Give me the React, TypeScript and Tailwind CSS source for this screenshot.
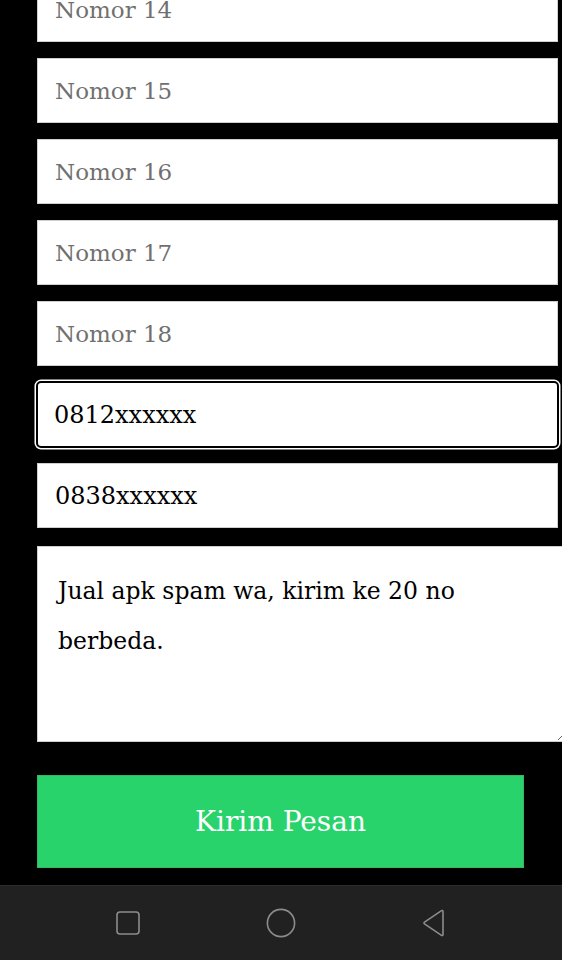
import { useState } from "react";

const fields = ["Nomor 14", "Nomor 15", "Nomor 16", "Nomor 17", "Nomor 18"];

const NavBar = () => (
  <div className="h-[75px] bg-[#212121] border-t border-[#2c2c2c] flex items-center justify-center gap-[123px] pb-[1px]">
    <svg width="28" height="28" viewBox="0 0 28 28" fill="none" stroke="#8c8c8c" strokeWidth="1.6">
      <rect x="3" y="3" width="22" height="22" rx="3" />
    </svg>
    <svg width="32" height="32" viewBox="0 0 32 32" fill="none" stroke="#8c8c8c" strokeWidth="1.6">
      <circle cx="16" cy="16" r="13.6" />
    </svg>
    <svg width="28" height="30" viewBox="0 0 28 30" fill="none" stroke="#8c8c8c" strokeWidth="1.6" strokeLinejoin="round">
      <path d="M23 3.5 C23 2.6 22.2 2.2 21.5 2.7 L4.5 14.2 C3.8 14.7 3.8 15.3 4.5 15.8 L21.5 27.3 C22.2 27.8 23 27.4 23 26.5 Z" />
    </svg>
  </div>
);

const App = () => {
  const [first, setFirst] = useState("0812xxxxxx");
  const [second, setSecond] = useState("0838xxxxxx");
  const [message, setMessage] = useState("Jual apk spam wa, kirim ke 20 no berbeda.");

  return (
    <div
      className="h-[960px] w-[562px] bg-black flex flex-col overflow-hidden"
      style={{ fontFamily: '"DejaVu Serif", "Liberation Serif", serif' }}
    >
      <div className="flex-1 overflow-hidden pl-[37px]">
        <div className="-mt-[23px] flex flex-col gap-[16px]">
          {fields.map((f) => (
            <input
              key={f}
              placeholder={f}
              className="w-[521px] h-[65px] bg-white border border-[#cfcfcf] px-[17px] text-[23px] text-black placeholder:text-[#707070] outline-none"
            />
          ))}
          <input
            value={first}
            onChange={(e) => setFirst(e.target.value)}
            className="-ml-[1px] w-[523px] h-[67px] -my-[1px] bg-white border-2 border-black rounded-[5px] shadow-[0_0_0_1.5px_white] px-[16px] text-[24px] text-black outline-none"
          />
          <input
            value={second}
            onChange={(e) => setSecond(e.target.value)}
            className="w-[521px] h-[65px] bg-white border border-[#cfcfcf] px-[17px] text-[24px] text-black outline-none"
          />
        </div>
        <textarea
          value={message}
          onChange={(e) => setMessage(e.target.value)}
          className="mt-[18px] block w-[530px] h-[196px] bg-white border border-[#cfcfcf] pt-[19px] pl-[20px] pr-[90px] text-[23.5px] leading-[50px] text-black outline-none resize"
        />
        <button className="mt-[33px] w-[487px] h-[93px] bg-[#29d36b] border border-[#3cb560] text-white text-[28px]">
          Kirim Pesan
        </button>
      </div>
      <NavBar />
    </div>
  );
};

export default App;
